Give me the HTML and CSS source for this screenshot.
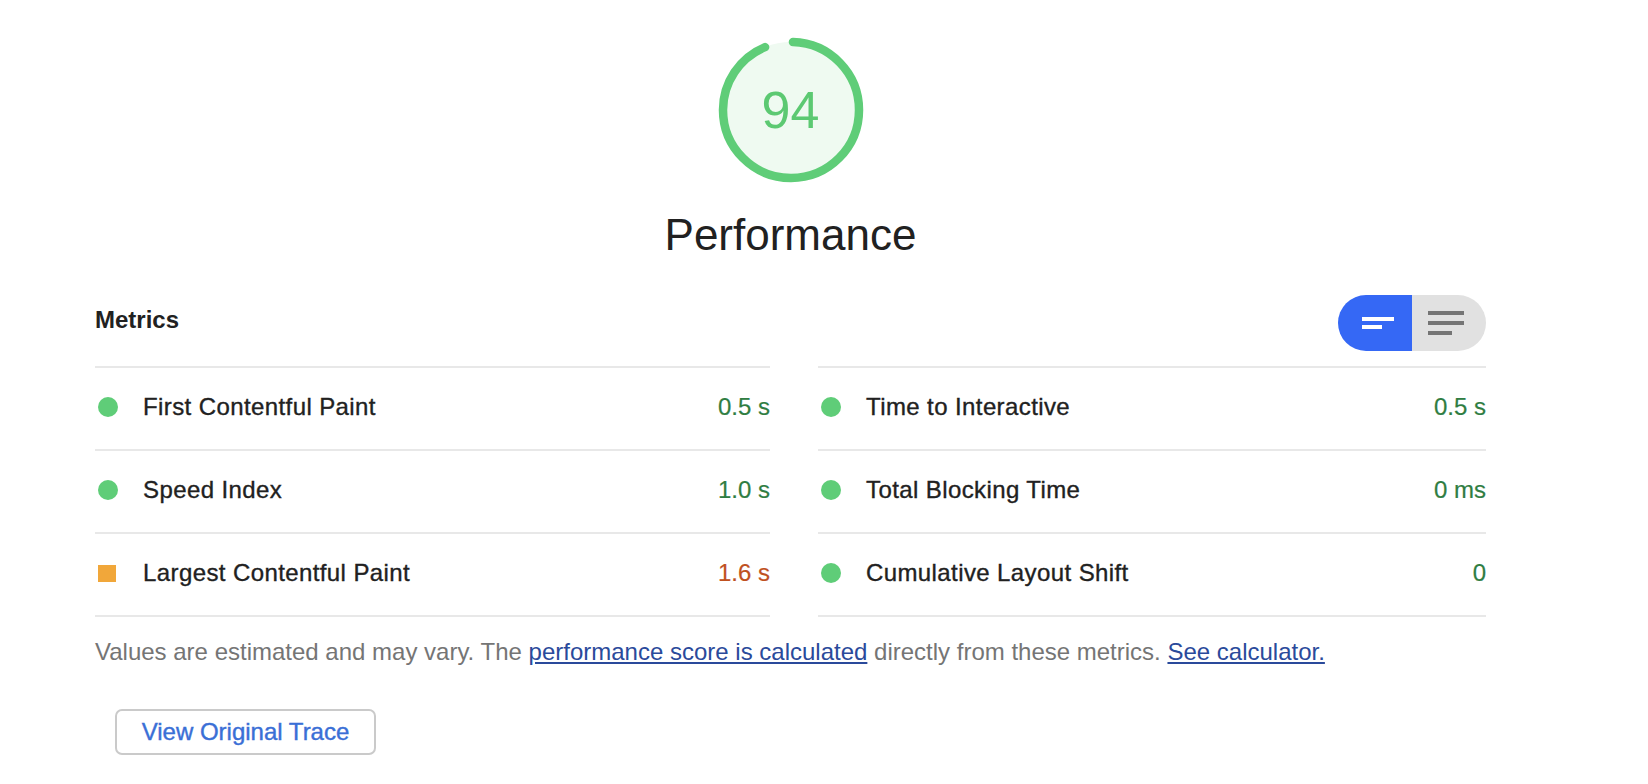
FILE: index.html
```html
<!DOCTYPE html>
<html lang="en">
<head>
<meta charset="utf-8">
<title>Performance</title>
<link rel="stylesheet" href="styles.css">
</head>
<body>
<div class="report">
  <div class="gauge-wrap">
    <div class="gauge">
      <svg class="gauge-svg" width="146" height="146" viewBox="0 0 146 146">
        <circle class="gauge-base" cx="73" cy="73" r="68"></circle>
        <circle class="gauge-arc" cx="73" cy="73" r="68" transform="rotate(-90 73 73)"></circle>
      </svg>
      <div class="gauge-score">94</div>
    </div>
    <div class="gauge-label">Performance</div>
  </div>

  <div class="metrics-header">
    <div class="metrics-title">Metrics</div>
    <div class="toggle">
      <div class="toggle-half toggle-on">
        <svg width="32" height="12" viewBox="0 0 32 12"><rect x="0" y="0" width="32" height="4" fill="#fff"/><rect x="0" y="8" width="20" height="4" fill="#fff"/></svg>
      </div>
      <div class="toggle-half toggle-off">
        <svg width="36" height="24" viewBox="0 0 36 24"><rect x="0" y="0" width="36" height="4" fill="#757575"/><rect x="0" y="10" width="36" height="4" fill="#757575"/><rect x="0" y="20" width="24" height="4" fill="#757575"/></svg>
      </div>
    </div>
  </div>

  <div class="metrics-grid">
    <div class="metrics-col">
      <div class="metric"><span class="ico dot"></span><span class="m-title">First Contentful Paint</span><span class="m-val pass">0.5 s</span></div>
      <div class="metric"><span class="ico dot"></span><span class="m-title">Speed Index</span><span class="m-val pass">1.0 s</span></div>
      <div class="metric"><span class="ico square"></span><span class="m-title">Largest Contentful Paint</span><span class="m-val avg">1.6 s</span></div>
    </div>
    <div class="metrics-col">
      <div class="metric"><span class="ico dot"></span><span class="m-title">Time to Interactive</span><span class="m-val pass">0.5 s</span></div>
      <div class="metric"><span class="ico dot"></span><span class="m-title">Total Blocking Time</span><span class="m-val pass">0 ms</span></div>
      <div class="metric"><span class="ico dot"></span><span class="m-title">Cumulative Layout Shift</span><span class="m-val pass">0</span></div>
    </div>
  </div>

  <p class="desc">Values are estimated and may vary. The <a href="#">performance score is calculated</a> directly from these metrics. <a href="#">See calculator.</a></p>

  <div class="btn-row"><button class="btn">View Original Trace</button></div>
</div>
</body>
</html>
```
FILE: styles.css
```css
* { box-sizing: border-box; }
html, body { margin: 0; padding: 0; background: #fff; }
body {
  font-family: "Liberation Sans", Arial, Helvetica, sans-serif;
  color: #212121;
}
.report {
  width: 1391px;
  margin-left: 95px;
  padding-top: 37px;
}
.gauge-wrap {
  display: flex;
  flex-direction: column;
  align-items: center;
}
.gauge {
  position: relative;
  width: 146px;
  height: 146px;
}
.gauge-svg { display: block; }
.gauge-base {
  fill: #effaf1;
  stroke: none;
}
.gauge-arc {
  fill: none;
  stroke: #5fcd78;
  stroke-width: 8.5;
  stroke-linecap: round;
  stroke-dasharray: 398 1000;
  stroke-dashoffset: -2;
}
.gauge-score {
  position: absolute;
  inset: 0;
  display: flex;
  align-items: center;
  justify-content: center;
  font-size: 52px;
  color: #5cc972;
  line-height: 1;
}
.gauge-label {
  margin-top: 27px;
  font-size: 44px;
  line-height: 50px;
  color: #212121;
}
.metrics-header {
  margin-top: 35px;
  height: 56px;
  display: flex;
  align-items: center;
  justify-content: space-between;
}
.metrics-title {
  font-size: 24px;
  font-weight: 700;
  color: #212121;
  margin-top: -6px;
}
.toggle {
  display: flex;
  width: 148px;
  height: 56px;
  border-radius: 28px;
  overflow: hidden;
}
.toggle-half {
  flex: 1;
  display: flex;
  align-items: center;
  justify-content: center;
}
.toggle-on { background: #3568f5; padding-left: 6px; }
.toggle-off { background: #e1e1e1; padding-right: 6px; }
.toggle-half svg { display: block; }
.metrics-grid {
  margin-top: 15px;
  display: grid;
  grid-template-columns: 675px 668px;
  column-gap: 48px;
}
.metrics-col {
  border-top: 2px solid #e8e8e8;
}
.metric {
  height: 83px;
  border-bottom: 2px solid #e8e8e8;
  display: flex;
  align-items: center;
  padding-left: 3px;
  padding-bottom: 3px;
  font-size: 24px;
}
.ico { flex: none; display: block; }
.dot {
  width: 20px;
  height: 20px;
  border-radius: 50%;
  background: #5fcd78;
}
.square {
  width: 18px;
  height: 17px;
  margin-right: 2px;
  background: #f1a73a;
}
.m-title {
  margin-left: 25px;
  flex: 1;
  color: #212121;
  font-weight: 500;
  letter-spacing: 0.4px;
  -webkit-text-stroke: 0.35px #212121;
}
.m-val {
  font-weight: 500;
  -webkit-text-stroke: 0.2px currentColor;
}
.pass { color: #2f7d42; }
.avg { color: #c0511f; }
.desc {
  margin: 20px 0 0 0;
  font-size: 24px;
  line-height: 30px;
  color: #757575;
}
.desc a {
  color: #2a4a9b;
  text-decoration: underline;
}
.btn-row {
  margin-top: 42px;
  padding-left: 20px;
}
.btn {
  width: 261px;
  height: 46px;
  border: 2px solid #cacaca;
  border-radius: 7px;
  background: #fff;
  font-family: "Liberation Sans", Arial, Helvetica, sans-serif;
  font-size: 24px;
  font-weight: 500;
  -webkit-text-stroke: 0.4px #3a6fd6;
  color: #3a6fd6;
  padding: 0;
}
```
